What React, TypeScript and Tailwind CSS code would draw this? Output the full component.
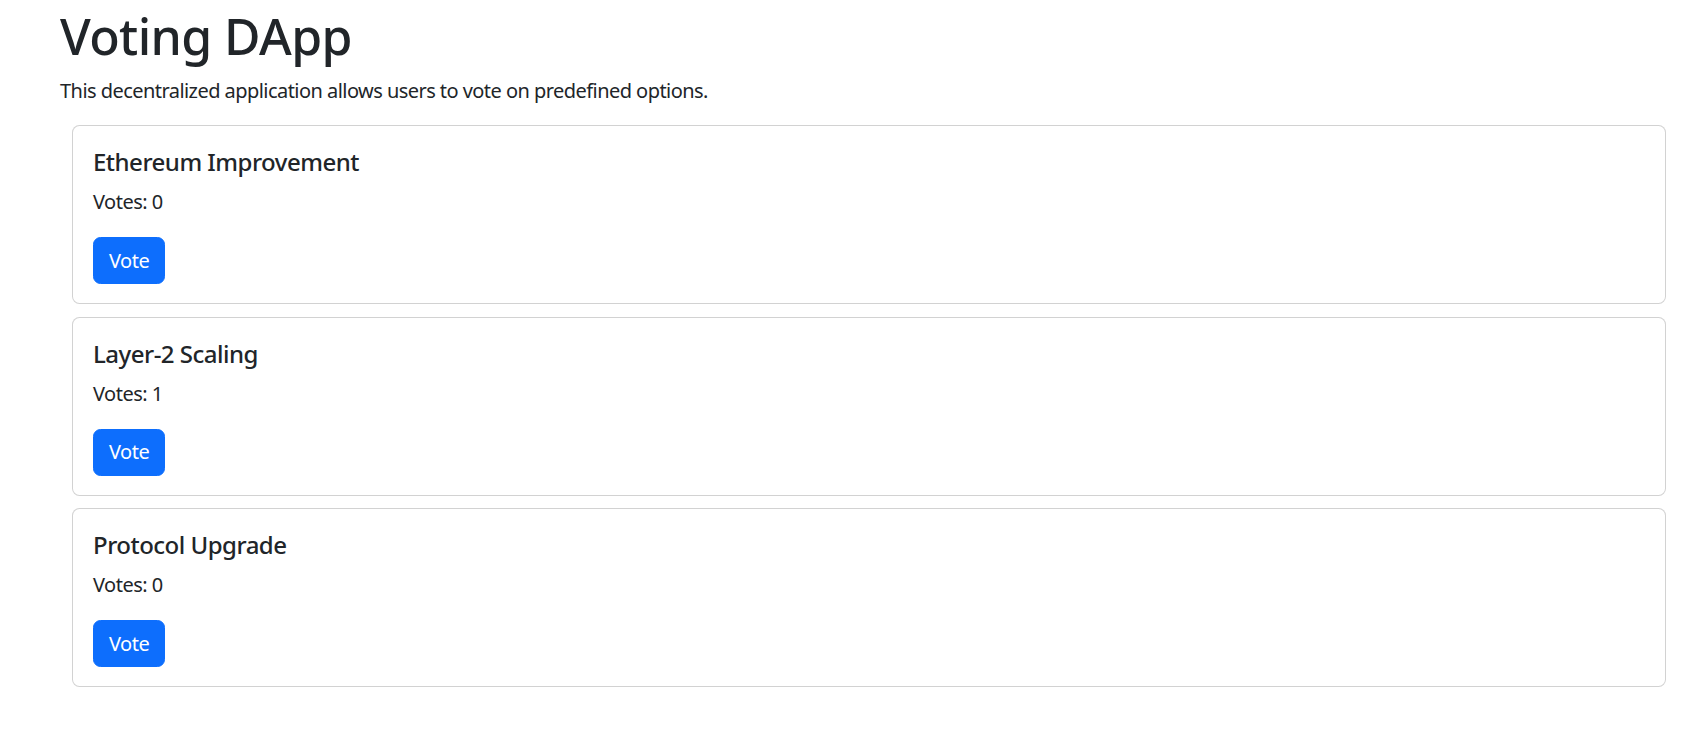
import React from "react";

const options = [
  { name: "Ethereum Improvement", votes: 0 },
  { name: "Layer-2 Scaling", votes: 1 },
  { name: "Protocol Upgrade", votes: 0 },
];

export default function App() {
  return (
    <div
      className="min-h-screen bg-white text-[#212529]"
      style={{ fontFamily: '"Noto Sans", "Open Sans", sans-serif' }}
    >
      <div className="pl-[60px] pr-[36px] pt-[6px]">
        <h1 className="text-[50px] leading-[1.2] font-medium tracking-[-0.6px] mb-[10px]">Voting DApp</h1>
        <p className="text-[20px] leading-[1.5] tracking-[-0.55px] mb-[19px]">
          This decentralized application allows users to vote on predefined options.
        </p>
        <div className="pl-[12px] flex flex-col gap-[12.5px]">
          {options.map((o) => (
            <div
              key={o.name}
              className="border border-[rgba(0,0,0,0.175)] rounded-[7.5px] px-[20px] pt-[21px] pb-[19px] bg-white"
            >
              <h5 className="text-[24px] leading-[30px] font-medium tracking-[-0.5px] mb-[10px]">{o.name}</h5>
              <p className="text-[20px] leading-[1.5] tracking-[-0.5px] mb-[20px]">Votes: {o.votes}</p>
              <button className="bg-[#0d6efd] text-white text-[20px] leading-[1.5] tracking-[-0.5px] px-[15px] py-[7.5px] border border-[#0d6efd] rounded-[7.5px]">
                Vote
              </button>
            </div>
          ))}
        </div>
      </div>
    </div>
  );
}
